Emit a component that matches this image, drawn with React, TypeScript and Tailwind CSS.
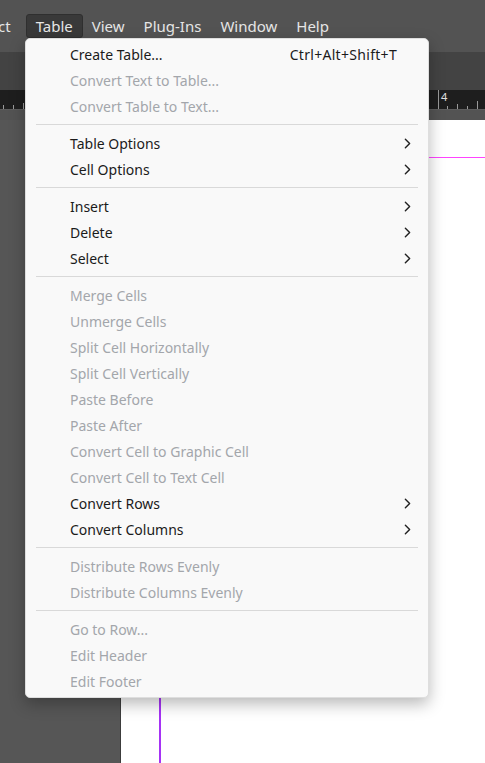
import { ChevronRight } from 'lucide-react'

type Item = { label: string; enabled?: boolean; shortcut?: string; sub?: boolean } | 'sep'

const ITEMS: Item[] = [
  { label: 'Create Table...', enabled: true, shortcut: 'Ctrl+Alt+Shift+T' },
  { label: 'Convert Text to Table...' },
  { label: 'Convert Table to Text...' },
  'sep',
  { label: 'Table Options', enabled: true, sub: true },
  { label: 'Cell Options', enabled: true, sub: true },
  'sep',
  { label: 'Insert', enabled: true, sub: true },
  { label: 'Delete', enabled: true, sub: true },
  { label: 'Select', enabled: true, sub: true },
  'sep',
  { label: 'Merge Cells' },
  { label: 'Unmerge Cells' },
  { label: 'Split Cell Horizontally' },
  { label: 'Split Cell Vertically' },
  { label: 'Paste Before' },
  { label: 'Paste After' },
  { label: 'Convert Cell to Graphic Cell' },
  { label: 'Convert Cell to Text Cell' },
  { label: 'Convert Rows', enabled: true, sub: true },
  { label: 'Convert Columns', enabled: true, sub: true },
  'sep',
  { label: 'Distribute Rows Evenly' },
  { label: 'Distribute Columns Evenly' },
  'sep',
  { label: 'Go to Row...' },
  { label: 'Edit Header' },
  { label: 'Edit Footer' },
]

const MENUS = ['View', 'Plug-Ins', 'Window', 'Help']

// ticks du règle : [x, hauteur]
const TICKS: [number, number][] = [
  [3, 4], [13, 4], [23, 6], [438, 19], [447, 3], [457, 5], [467, 3], [477, 8],
]

export default function App() {
  return (
    <div className="relative w-[485px] h-[763px] overflow-hidden bg-[#535353] font-['Noto_Sans',sans-serif]">
      {/* menu bar */}
      <div className="h-[52px] flex items-center text-[15px] text-[#e6e6e6]">
        <span className="ml-[-2px] mr-[15px]">ct</span>
        <span className="h-[24px] px-[9px] flex items-center rounded-[3px] bg-[#393939] border border-[#2f2f2f]">
          Table
        </span>
        <div className="flex items-center gap-[19px] ml-[9px]">
          {MENUS.map((m) => (
            <span key={m}>{m}</span>
          ))}
        </div>
      </div>

      {/* control strip */}
      <div className="h-[38px] bg-[#434343]" />

      {/* ruler */}
      <div className="relative h-[19px] bg-[#1e1e1e]">
        <svg width="485" height="19" className="block">
          {TICKS.map(([x, h]) => (
            <rect key={x} x={x} y={19 - h} width="1" height={h} fill="#9a9a9a" />
          ))}
        </svg>
        <span className="absolute left-[441px] top-0 text-[11px] leading-[14px] text-[#e0e0e0]">4</span>
      </div>
      <div className="h-[11px] bg-[#535353] border-t border-[#5e5e5e]" />

      {/* canvas */}
      <div className="flex h-[643px]">
        <div className="w-[121px] bg-[#565656] border-r border-[#3c3c3c]" />
        <div className="relative flex-1 bg-white">
          <div className="absolute left-[38px] top-0 bottom-0 w-[2px] bg-[#a633f5]" />
          <div className="absolute left-0 right-0 top-[37px] h-px bg-[#ff44ff]" />
        </div>
      </div>

      {/* dropdown */}
      <div className="absolute left-[25px] top-[38px] w-[404px] pt-[2px] pb-[3px] rounded-[5px] bg-[#f9f9f9] border border-[#dedede] shadow-[0_6px_16px_rgba(0,0,0,0.28)] text-[14px]">
        {ITEMS.map((it, i) =>
          it === 'sep' ? (
            <div key={i} className="mx-[10px] my-[5px] h-px bg-[#d9d9d9]" />
          ) : (
            <div
              key={i}
              className={`h-[26px] flex items-center pl-[44px] pr-[12px] ${it.enabled ? 'text-[#1b1b1b]' : 'text-[#a3a6ab]'}`}
            >
              <span className="flex-1">{it.label}</span>
              {it.shortcut && <span className="mr-[19px] tracking-[0.3px]">{it.shortcut}</span>}
              {it.sub && <ChevronRight size={17} strokeWidth={2} className="text-[#222]" />}
            </div>
          ),
        )}
      </div>
    </div>
  )
}
